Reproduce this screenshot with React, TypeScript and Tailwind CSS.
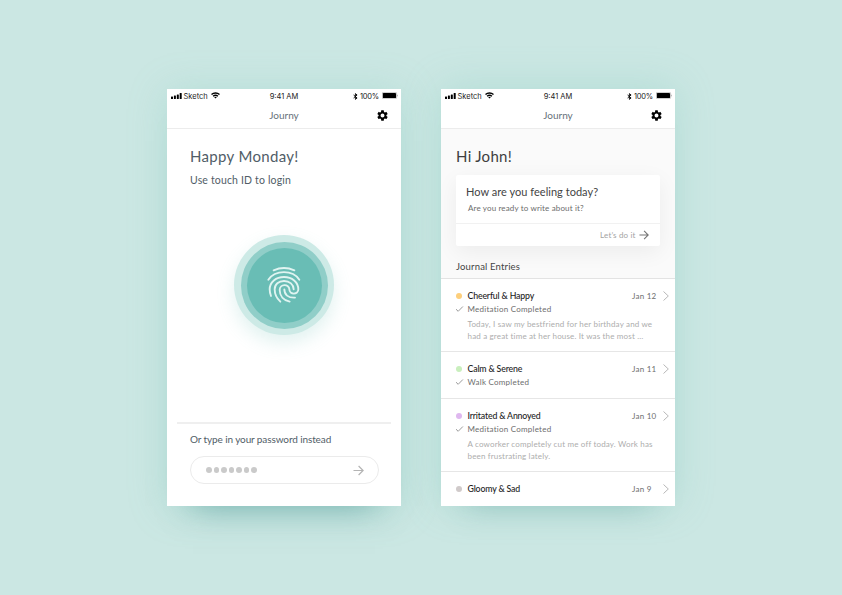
import type { ReactNode } from "react";
import { MdSettings } from "react-icons/md";

function StatusBar() {
  return (
    <div className="relative flex h-[15px] items-center pr-[3px] pl-[4px] font-['Inter',sans-serif] text-[7.5px] leading-[15px] text-[#222]">
      <svg className="mb-[1px] h-[6px] w-[11px]" viewBox="0 0 11 6" fill="#000">
        <rect x="0" y="3.6" width="2" height="2.4" rx=".5" />
        <rect x="2.9" y="2.6" width="2" height="3.4" rx=".5" />
        <rect x="5.8" y="1.4" width="2" height="4.6" rx=".5" />
        <rect x="8.7" y="0" width="2" height="6" rx=".5" />
      </svg>
      <span className="ml-[1.5px]">Sketch</span>
      <svg className="mb-[2px] ml-[3.5px] h-[7px] w-[9px]" viewBox="0 0 9 7" fill="none" stroke="#000" strokeWidth="1.35">
        <path d="M.5 2.6a5.7 5.7 0 0 1 8 0" />
        <path d="M2.1 4.3a3.5 3.5 0 0 1 4.8 0" />
        <path d="M4.5 6.6 3.2 5.3a1.9 1.9 0 0 1 2.6 0z" fill="#000" stroke="none" />
      </svg>
      <span className="absolute left-1/2 -translate-x-1/2">9:41 AM</span>
      <svg className="mb-[1px] ml-auto h-[7px] w-[5px]" viewBox="0 0 5 7" fill="none" stroke="#000" strokeWidth=".9">
        <path d="M.6 2 4.1 5 2.4 6.4V.6L4.1 2 .6 5" />
      </svg>
      <span className="ml-[1.5px] tracking-[-0.2px]">100%</span>
      <svg className="mb-[2px] ml-[2.5px] h-[7px] w-[16.5px]" viewBox="0 0 16.5 7">
        <rect x=".3" y=".3" width="14.3" height="6.4" rx="1.2" fill="none" stroke="#888" strokeWidth=".5" />
        <rect x=".9" y=".9" width="13.1" height="5.2" rx=".7" fill="#000" />
        <path d="M15.3 2.4a1.3 1.3 0 0 1 0 2.2z" fill="#888" />
      </svg>
    </div>
  );
}

function Phone({ children, shadow }: { children: ReactNode; shadow: string }) {
  return (
    <section className={`flex h-[417px] w-[234px] flex-col bg-white ${shadow}`}>
      <StatusBar />
      <header className="relative flex h-[25px] shrink-0 items-start justify-center border-b border-[#ececec] pt-[4px] text-[10px] text-[#66717a]">
        <h1 className="leading-[14px]">Journy</h1>
        <MdSettings className="absolute top-[5px] right-[12.5px] size-[13px] text-black" />
      </header>
      {children}
    </section>
  );
}

function Arrow({ color, className }: { color: string; className: string }) {
  return (
    <svg className={className} viewBox="0 0 11 11" fill="none" stroke={color} strokeWidth="1.2">
      <path d="M.5 5.5h9.4M5.6 1l4.5 4.5L5.6 10" />
    </svg>
  );
}

function Fingerprint() {
  return (
    <svg className="-mt-[1px] h-[38px] w-[34px]" viewBox="35 31 102 114" fill="none" stroke="#e0f4f1" strokeWidth="5.6" strokeLinecap="round">
      <path d="M55 44Q86 30 117 44" />
      <path d="M39 72C60 42 112 42 132 72" />
      <path d="M47 121C43 111 43 106 43 101C43 79 62 64 86 64C110 64 129 79 129 101C129 118 102 118 102 101C102 84 73 84 73 103C73 121 85 134 103 138" />
      <path d="M75 138C64 128 58 116 58 101C58 86 70 76 86 76C103 76 115 87 115 101" />
      <path d="M87 101C87 117 98 127 119 126" />
    </svg>
  );
}

function Login() {
  return (
    <Phone shadow="shadow-[0_2px_36px_rgba(120,195,182,0.27),0_26px_32px_-26px_rgba(60,135,135,0.62)]">
      <div className="flex flex-1 flex-col pl-[23px] text-[#515d67]">
        <h2 className="mt-[17px] text-[15px] leading-5 tracking-[0.32px]">Happy Monday!</h2>
        <p className="mt-[7px] text-[10.5px] leading-[14px] tracking-[0.16px]">Use touch ID to login</p>
        <div className="mt-[48px] ml-[44px] flex size-[100px] items-center justify-center rounded-full bg-[#cdeae6] shadow-[0_8px_18px_rgba(105,190,181,0.2)]">
          <div className="flex size-[87px] items-center justify-center rounded-full bg-[#90cec8]">
            <div className="flex size-[75px] items-center justify-center rounded-full bg-[#69bdb5]">
              <Fingerprint />
            </div>
          </div>
        </div>
        <div className="mt-[87px] -ml-[13px] h-[2px] w-[214px] bg-[#efefef]" />
        <p className="mt-[8px] text-[10px] leading-[14px] tracking-[-0.11px]">Or type in your password instead</p>
        <div className="mt-[10px] flex h-[28px] w-[189px] items-center justify-between rounded-full border border-[#ebebeb] pr-[14px] pl-[15px]">
          <div className="flex gap-[2px]">
            {[0, 1, 2, 3, 4, 5, 6].map((i) => (
              <span key={i} className="size-[5.5px] rounded-full bg-[#cacaca]" />
            ))}
          </div>
          <Arrow color="#b4b4b4" className="size-[11px]" />
        </div>
      </div>
    </Phone>
  );
}

interface Entry {
  mood: string;
  dot: string;
  date: string;
  activity?: string;
  note?: string[];
  size: string;
}

const entries: Entry[] = [
  {
    mood: "Cheerful & Happy", dot: "bg-[#fdcf7c]", date: "Jan 12", activity: "Meditation Completed",
    note: ["Today, I saw my bestfriend for her birthday and we", "had a great time at her house. It was the most …"],
    size: "h-[73px] border-b",
  },
  { mood: "Calm & Serene", dot: "bg-[#c9efbd]", date: "Jan 11", activity: "Walk Completed", size: "h-[47px] border-b" },
  {
    mood: "Irritated & Annoyed", dot: "bg-[#dfb8ef]", date: "Jan 10", activity: "Meditation Completed",
    note: ["A coworker completely cut me off today. Work has", "been frustrating lately."],
    size: "h-[73px] border-b",
  },
  { mood: "Gloomy & Sad", dot: "bg-[#d0caca]", date: "Jan 9", size: "h-[34px]" },
];

function EntryRow({ entry }: { entry: Entry }) {
  return (
    <li className={`${entry.size} shrink-0 border-[#e6e6e6] pt-[10px] pl-[15px]`}>
      <div className="flex h-[14px] items-center">
        <span className={`size-[6px] rounded-full ${entry.dot}`} />
        <h4 className="ml-[5.5px] flex-1 text-[8.75px] leading-[14px] font-medium tracking-[-0.16px] text-[#1d1d1d]">{entry.mood}</h4>
        <time className="w-[30.5px] text-[8px] leading-[14px] tracking-[0.25px] text-[#6d6d6d]">{entry.date}</time>
        <svg className="mr-[6.5px] h-[10px] w-[6px]" viewBox="0 0 6 10" fill="none" stroke="#b0b0b0" strokeWidth=".9">
          <path d="M.5.5 5.3 5 .5 9.5" />
        </svg>
      </div>
      {entry.activity && (
        <div className="-mt-[1px] flex h-[14px] items-center">
          <svg className="h-[6px] w-[8px]" viewBox="0 0 8 6" fill="none" stroke="#808080" strokeWidth=".8">
            <path d="M0 3.2 2.2 5.3 6.9.5" />
          </svg>
          <p className="ml-[3.5px] text-[8px] leading-[14px] tracking-[0.24px] text-[#6d6d6d]">{entry.activity}</p>
        </div>
      )}
      {entry.note && (
        <p className="mt-[3px] ml-[11.5px] text-[8px] leading-[11.5px] tracking-[0.17px] whitespace-nowrap text-[#adadad]">
          {entry.note[0]}
          <br />
          {entry.note[1]}
        </p>
      )}
    </li>
  );
}

function Journal() {
  return (
    <Phone shadow="shadow-[0_-2px_36px_rgba(120,195,182,0.29),0_24px_30px_-26px_rgba(60,135,135,0.38)]">
      <div className="h-[150px] shrink-0 border-b border-[#e3e3e3] bg-[#fafafa] pl-[15px]">
        <h2 className="pt-[17px] text-[15px] leading-5 tracking-[0.3px] text-[#3e3e3e]">Hi John!</h2>
        <div className="mt-[9px] flex h-[71px] w-[204px] flex-col rounded-[2px] bg-white shadow-[0_6px_22px_rgba(0,0,0,0.06)]">
          <div className="h-[49px] border-b border-[#f1f1f1] pt-[10px] pl-[10px]">
            <h3 className="text-[11px] leading-[14px] tracking-[0.03px] text-[#444]">How are you feeling today?</h3>
            <p className="mt-[3px] ml-[2px] text-[8px] leading-[12px] tracking-[0.15px] text-[#6c6c6c]">Are you ready to write about it?</p>
          </div>
          <div className="flex flex-1 items-center justify-end pr-[11px] text-[8px] tracking-[0.15px] text-[#a3a3a3]">
            <span>Let’s do it</span>
            <Arrow color="#757575" className="ml-[3.5px] size-[10px]" />
          </div>
        </div>
        <h3 className="mt-[14px] text-[9.5px] leading-[14px] tracking-[0.17px] text-[#444]">Journal Entries</h3>
      </div>
      <ul className="flex flex-col">
        {entries.map((e) => (
          <EntryRow key={e.mood} entry={e} />
        ))}
      </ul>
    </Phone>
  );
}

export default function App() {
  return (
    <main className="flex h-[595px] w-[842px] items-start justify-center gap-[40px] bg-[#cbe7e3] pt-[89px] font-['Lato',sans-serif]">
      <Login />
      <Journal />
    </main>
  );
}
